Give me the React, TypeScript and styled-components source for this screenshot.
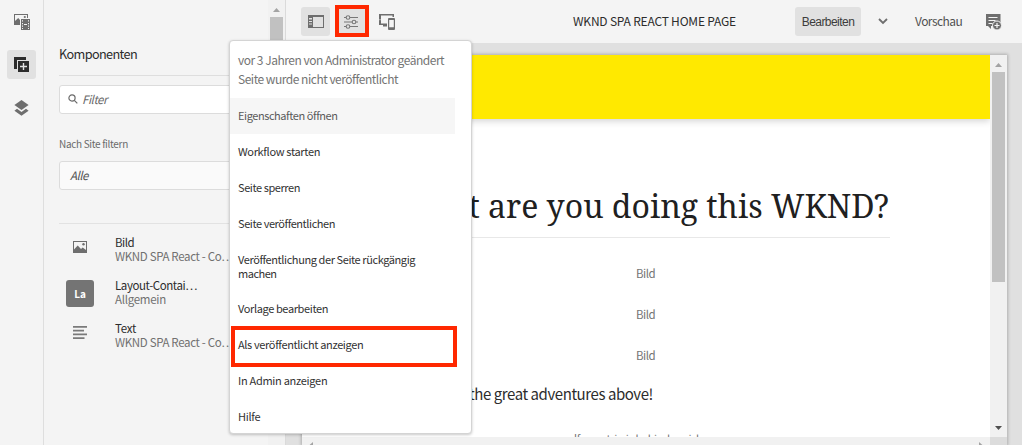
import React from 'react';
import styled, { createGlobalStyle } from 'styled-components';

const sans = '"Noto Sans CJK JP", "Open Sans", sans-serif';

const GlobalStyle = createGlobalStyle`
  * { box-sizing: border-box; }
  body { margin: 0; overflow: hidden; font-family: ${sans}; color: #323232; }
`;

const Editor = styled.div`
  position: relative;
  display: flex;
  width: 1022px;
  height: 445px;
  overflow: hidden;
  background: #f4f4f4;
`;

const Label = styled.span<{ $size: number; $track: number; $color?: string; $line?: number; $italic?: boolean }>`
  display: block;
  white-space: nowrap;
  font-size: ${p => p.$size}px;
  letter-spacing: ${p => p.$track}px;
  line-height: ${p => p.$line ?? 14}px;
  color: ${p => p.$color ?? '#2c2c2c'};
  font-style: ${p => (p.$italic ? 'italic' : 'normal')};
`;

/* Left rail */
const Rail = styled.nav`
  flex: none;
  width: 44px;
  padding: 7px 0 0 7px;
  border-right: 1px solid #dedede;
  display: flex;
  flex-direction: column;
  gap: 14px;
`;

const IconButton = styled.div<{ $active?: boolean }>`
  position: relative;
  display: flex;
  flex: none;
  align-items: center;
  justify-content: center;
  width: 29px;
  height: 29px;
  border-radius: 3px;
  background: ${p => (p.$active ? '#e1e1e1' : 'transparent')};
  svg { display: block; flex: none; }
`;

/* Component panel */
const Panel = styled.aside`
  flex: none;
  width: 242px;
  display: flex;
  border-right: 1px solid #dadada;
`;

const PanelBody = styled.div`
  flex: 1;
  min-width: 0;
  padding: 47px 0 0 15px;
`;

const PanelTitle = styled.h2`
  margin: 0;
  height: 29px;
  font-weight: 400;
  border-bottom: 1px solid #dedede;
`;

const Field = styled.div<{ $fill: string; $pad: number }>`
  display: flex;
  align-items: center;
  gap: 4px;
  height: 29px;
  padding: 0 ${p => p.$pad}px 1px;
  border: 1px solid #dcdcdc;
  border-radius: 3px;
  background: ${p => p.$fill};
`;

const FilterGroup = styled.div`
  padding: 9px 0 33px;
  border-bottom: 1px solid #e2e2e2;
`;

const FieldLabel = styled.div`
  padding: 23px 0 10px;
`;

const ComponentRow = styled.div`
  display: flex;
  height: 43px;
  padding-left: 7px;
  gap: 21px;
`;

const ComponentList = styled.div`
  padding-top: 11px;
`;

const Thumb = styled.div<{ $filled?: boolean }>`
  width: 28px;
  height: 27px;
  margin-top: 2px;
  display: flex;
  align-items: center;
  justify-content: center;
  border-radius: 3px;
  background: ${p => (p.$filled ? '#747474' : 'transparent')};
  color: #fff;
  font-size: 10px;
  font-weight: 700;
  line-height: 14px;
  padding-bottom: ${p => (p.$filled ? 0 : 8)}px;
`;

const PanelTrack = styled.div`
  width: 17px;
  background: #f1f1f1;
  display: flex;
  flex-direction: column;
  align-items: center;
  padding: 7px 1px 0 0;
  gap: 5px;
`;

const ScrollThumb = styled.div<{ $h: number }>`
  width: 13px;
  height: ${p => p.$h}px;
  background: #c1c1c1;
`;

/* Main area */
const Main = styled.main`
  flex: 1;
  display: flex;
  flex-direction: column;
  min-width: 0;
`;

const Toolbar = styled.header`
  flex: none;
  height: 43px;
  display: flex;
  align-items: center;
  padding: 0 15px;
`;

const ToolGroup = styled.div`
  display: flex;
  gap: 7px;
  width: 272px;
`;

const PageName = styled.div`
  width: 222px;
  padding-bottom: 1px;
`;

const ModeButton = styled.button`
  border: 0;
  width: 66px;
  height: 29px;
  padding: 0;
  border-radius: 3px;
  background: #e1e1e1;
  display: flex;
  align-items: center;
  justify-content: center;
`;

const ModeTools = styled.div`
  display: flex;
  align-items: center;
  svg { display: block; }
`;

const Chevron = styled.div`
  width: 54px;
  padding-left: 17px;
`;

const PreviewLink = styled.div`
  width: 71px;
  padding-bottom: 1px;
`;

const Stage = styled.div`
  flex: 1;
  min-height: 0;
  padding: 12px 15px 0 16px;
  background: #e0e0e0;
`;

const Frame = styled.div`
  height: 390px;
  display: grid;
  grid-template: 382px 8px / 1fr 17px;
  background: #fff;
  box-shadow: 0 0 3px 1px rgba(0, 0, 0, 0.22);
`;

const Page = styled.div`
  overflow: hidden;
`;

const Banner = styled.div`
  height: 64px;
  background: #ffe900;
  box-shadow: 0 2px 7px rgba(0, 0, 0, 0.18);
`;

const Article = styled.div`
  width: 488px;
  margin-left: 100px;
`;

const Heading = styled.h1`
  margin: 0;
  height: 119px;
  padding: 64px 1px 0 0;
  display: flex;
  justify-content: flex-end;
  white-space: nowrap;
  font: 400 32px/46px "Noto Serif", "Liberation Serif", serif;
  color: #202020;
  border-bottom: 1px solid #e8e8e8;
`;

const Placeholder = styled.div`
  height: 41px;
  padding: 12px 1px 0 0;
  text-align: center;
`;

const Placeholders = styled.div`
  padding-top: 16px;
`;

const Paragraph = styled.div`
  width: 251px;
  margin-top: 7px;
  display: flex;
  justify-content: flex-end;
`;

const Footnote = styled.div`
  margin-top: 27px;
  padding-left: 146px;
`;

const FrameTrack = styled.div`
  background: #f1f1f1;
  display: flex;
  flex-direction: column;
  align-items: center;
  gap: 5px;
  padding: 7px 0;
  > :last-child { margin-top: auto; }
`;

const HTrack = styled.div`
  background: #f1f1f1;
  display: flex;
  justify-content: space-between;
  padding: 5px 7px 0;
  overflow: hidden;
`;

const Corner = styled.div`
  background: #dcdcdc;
`;

/* Page information menu */
const Menu = styled.div`
  position: absolute;
  left: 229px;
  top: 40px;
  width: 243px;
  height: 394px;
  border: 1px solid #d4d4d4;
  border-radius: 4px;
  background: #fff;
  box-shadow: 0 1px 3px rgba(0, 0, 0, 0.22);
`;

const MenuInfo = styled.div`
  height: 57px;
  padding: 9px 0 0 8px;
`;

const MenuItem = styled.div<{ $tall?: boolean; $hover?: boolean }>`
  position: relative;
  width: 225px;
  height: ${p => (p.$tall ? 49 : 36)}px;
  padding: 0 0 2px 8px;
  display: flex;
  flex-direction: column;
  justify-content: center;
  background: ${p => (p.$hover ? '#f6f6f6' : 'transparent')};
`;

const Highlight = styled.div<{ $x: number; $y: number; $w: number; $h: number }>`
  position: absolute;
  left: ${p => p.$x}px;
  top: ${p => p.$y}px;
  width: ${p => p.$w}px;
  height: ${p => p.$h}px;
  border: 4px solid #ff2800;
`;

const Arrow = ({ dir, color }: { dir: 'up' | 'down' | 'left' | 'right'; color: string }) => {
  const d = { up: 'M0 5L3.5 1 7 5z', down: 'M0 1L3.5 5 7 1z', left: 'M4 0L0 3.5 4 7z', right: 'M0 0L4 3.5 0 7z' }[dir];
  const flat = dir === 'up' || dir === 'down';
  return <svg width={flat ? 7 : 4} height={flat ? 5 : 7} fill={color}><path d={d} /></svg>;
};

const AssetsIcon = () => (
  <svg width="16" height="16" fill="#6e6e6e">
    <path fillRule="evenodd" d="M0 0h14v4h-1V1H1v6l3.2-3L6 6v5H0z" />
    <circle cx="10.8" cy="3" r="1.1" />
    <path fillRule="evenodd" d="M7 5h9v11H7zM8 6.200v1.200h1V6.200zm6 0v1.200h1V6.200zM8 9v1.200h1V9zm6 0v1.200h1V9zM8 11.500v1.200h1v-1.200zm6 0v1.200h1v-1.200zM8 14v1h1v-1zm6 0v1h1v-1zM10 10v.9h3V10z" />
  </svg>
);

const ComponentsIcon = () => (
  <svg width="15" height="15" fill="#2c2c2c">
    <path d="M0 0h12v3H3v9H0z" />
    <path fillRule="evenodd" d="M4 4h11v11H4zM8.800 6v2.800H6v1.400h2.800V13h1.400v-2.800H13V8.800h-2.800V6z" />
  </svg>
);

const LayersIcon = () => (
  <svg width="15" height="16" fill="#6e6e6e">
    <path d="M7.500 0L14.600 5 7.500 10 .4 5z" />
    <path d="M3 8.700L7.500 11.900 12 8.700 14.600 10.700 7.500 15.800.4 10.700z" />
  </svg>
);

const SearchIcon = () => (
  <svg width="10" height="10" fill="none" stroke="#6a6a6a" strokeWidth="1.2">
    <circle cx="4" cy="4" r="3.100" /><path d="M6.300 6.300L9.300 9.300" />
  </svg>
);

const ImageIcon = () => (
  <svg width="14" height="12" fill="#6e6e6e">
    <path fillRule="evenodd" d="M0 0h14v12H0zM1 1v7.500L4.700 4.500 8 8l1.700-1.400L13 9V1z" />
    <circle cx="10.500" cy="3.300" r="1.200" />
  </svg>
);

const TextIcon = () => (
  <svg width="14" height="13" fill="#7a7a7a">
    <path d="M0 0h14v1.700H0zM0 3.700h11v1.700H0zM0 7.500h14v1.700H0zM0 11.200h11.500v1.700H0z" />
  </svg>
);

const SidePanelIcon = () => (
  <svg width="16" height="13" fill="#6e6e6e">
    <path fillRule="evenodd" d="M0 0h16v13H0zM5 2v10h10V2zM1 3v1.500h3V3zM1 6v1h3V6zM1 8.500v1h3v-1z" />
  </svg>
);

const SlidersIcon = () => (
  <svg width="15" height="14" fill="none" stroke="#777" strokeWidth="1.100">
    <path d="M0 2.500h2M6 2.500h8M0 7h8M12 7h2M0 11.500h2M6 11.500h8" />
    <circle cx="4" cy="2.500" r="1.800" /><circle cx="10" cy="7" r="1.800" /><circle cx="4" cy="11.500" r="1.800" />
  </svg>
);

const DevicesIcon = () => (
  <svg width="17" height="16" fill="#6e6e6e">
    <path fillRule="evenodd" d="M0 0h15v3h-1.500V1.500H2v8h6V11H0zM.6 5v1.200h.8V5z" />
    <path fillRule="evenodd" d="M10 4h5a1 1 0 0 1 1 1v10a1 1 0 0 1-1 1h-5a1 1 0 0 1-1-1V5a1 1 0 0 1 1-1zM10.200 6v7.200h4.600V6z" />
    <path d="M4 12.500V11h4v1.500z" />
  </svg>
);

const AnnotateIcon = () => (
  <svg width="16" height="15" overflow="visible">
    <path fill="#6e6e6e" d="M0 0h14.500v8H8v4H5v3l-3-3H0z" />
    <path stroke="#f4f4f4" d="M2.500 3.500h9M2.500 6.500h7M2.500 9.500h4" />
    <circle cx="11" cy="11.500" r="4.500" fill="#6e6e6e" stroke="#f4f4f4" />
    <path stroke="#f4f4f4" strokeWidth="1.200" d="M8.500 11.500h5M11 9v5" />
  </svg>
);

const components = [
  { name: 'Bild', track: -0.53, group: 'WKND SPA React - Co…', groupTrack: -0.34, icon: <ImageIcon /> },
  { name: 'Layout-Contai…', track: -0.41, group: 'Allgemein', groupTrack: -0.27, icon: null },
  { name: 'Text', track: -0.27, group: 'WKND SPA React - Co…', groupTrack: -0.34, icon: <TextIcon /> },
];

const menuItems: { lines: [string, number][]; hover?: boolean; marked?: boolean }[] = [
  { lines: [['Eigenschaften öffnen', -0.43]], hover: true },
  { lines: [['Workflow starten', -0.33]] },
  { lines: [['Seite sperren', -0.42]] },
  { lines: [['Seite veröffentlichen', -0.43]] },
  { lines: [['Veröffentlichung der Seite rückgängig', -0.41], ['machen', -0.5]] },
  { lines: [['Vorlage bearbeiten', -0.38]] },
  { lines: [['Als veröffentlicht anzeigen', -0.36]], marked: true },
  { lines: [['In Admin anzeigen', -0.29]] },
  { lines: [['Hilfe', -0.3]] },
];

export default function App() {
  return (
    <>
      <GlobalStyle />
      <Editor>
        <Rail>
          <IconButton><AssetsIcon /></IconButton>
          <IconButton $active><ComponentsIcon /></IconButton>
          <IconButton><LayersIcon /></IconButton>
        </Rail>
        <Panel>
          <PanelBody>
            <PanelTitle><Label $size={12.7} $track={-0.63}>Komponenten</Label></PanelTitle>
            <FilterGroup>
              <Field $fill="#fff" $pad={8}>
                <SearchIcon />
                <Label $size={11.5} $track={-0.46} $color="#6a6a6a" $italic>Filter</Label>
              </Field>
              <FieldLabel><Label $size={10} $track={-0.32} $color="#6a6a6a">Nach Site filtern</Label></FieldLabel>
              <Field $fill="#fafafa" $pad={10}>
                <Label $size={11.5} $track={-0.48} $color="#555" $italic>Alle</Label>
              </Field>
            </FilterGroup>
            <ComponentList>
              {components.map(c => (
                <ComponentRow key={c.name}>
                  <Thumb $filled={!c.icon}>{c.icon ?? 'La'}</Thumb>
                  <div>
                    <Label $size={11.5} $track={c.track}>{c.name}</Label>
                    <Label $size={11.5} $track={c.groupTrack} $color="#707070">{c.group}</Label>
                  </div>
                </ComponentRow>
              ))}
            </ComponentList>
          </PanelBody>
          <PanelTrack>
            <Arrow dir="up" color="#a3a3a3" />
            <ScrollThumb $h={300} />
          </PanelTrack>
        </Panel>
        <Main>
          <Toolbar>
            <ToolGroup>
              <IconButton $active><SidePanelIcon /></IconButton>
              <IconButton $active>
                <SlidersIcon />
                <Highlight $x={-2} $y={-2} $w={34} $h={32} />
              </IconButton>
              <IconButton><DevicesIcon /></IconButton>
            </ToolGroup>
            <PageName><Label $size={12} $track={-0.2}>WKND SPA REACT HOME PAGE</Label></PageName>
            <ModeTools>
              <ModeButton><Label $size={12} $track={-0.55} $color="#3c3c3c">Bearbeiten</Label></ModeButton>
              <Chevron>
                <svg width="10" height="7" fill="none" stroke="#6e6e6e" strokeWidth="1.800"><path d="M1 1l4 4 4-4" /></svg>
              </Chevron>
              <PreviewLink><Label $size={12} $track={-0.55} $color="#505050">Vorschau</Label></PreviewLink>
              <AnnotateIcon />
            </ModeTools>
          </Toolbar>
          <Stage>
            <Frame>
              <Page>
                <Banner />
                <Article>
                  <Heading>What are you doing this WKND?</Heading>
                  <Placeholders>
                    {[0, 1, 2].map(i => (
                      <Placeholder key={i}><Label $size={11.5} $track={-0.5} $color="#747474">Bild</Label></Placeholder>
                    ))}
                  </Placeholders>
                  <Paragraph><Label $size={15} $track={-0.43} $line={20}>Check out the great adventures above!</Label></Paragraph>
                  <Footnote><Label $size={11} $track={-0.3} $color="#747474">myself your trip is behind a wish</Label></Footnote>
                </Article>
              </Page>
              <FrameTrack>
                <Arrow dir="up" color="#a3a3a3" />
                <ScrollThumb $h={210} />
                <Arrow dir="down" color="#505050" />
              </FrameTrack>
              <HTrack>
                <Arrow dir="left" color="#a3a3a3" />
                <Arrow dir="right" color="#a3a3a3" />
              </HTrack>
              <Corner />
            </Frame>
          </Stage>
        </Main>
        <Menu>
          <MenuInfo>
            <Label $size={12} $track={-0.49} $line={19} $color="#747474">vor 3 Jahren von Administrator geändert</Label>
            <Label $size={12} $track={-0.49} $line={19} $color="#747474">Seite wurde nicht veröffentlicht</Label>
          </MenuInfo>
          {menuItems.map(item => (
            <MenuItem key={item.lines[0][0]} $hover={item.hover} $tall={item.lines.length > 1}>
              {item.lines.map(([text, track]) => (
                <Label key={text} $size={11} $track={track} $color={item.hover ? '#5a5a5a' : '#323232'}>{text}</Label>
              ))}
              {item.marked && <Highlight $x={1} $y={-1} $w={226} $h={41} />}
            </MenuItem>
          ))}
        </Menu>
      </Editor>
    </>
  );
}
